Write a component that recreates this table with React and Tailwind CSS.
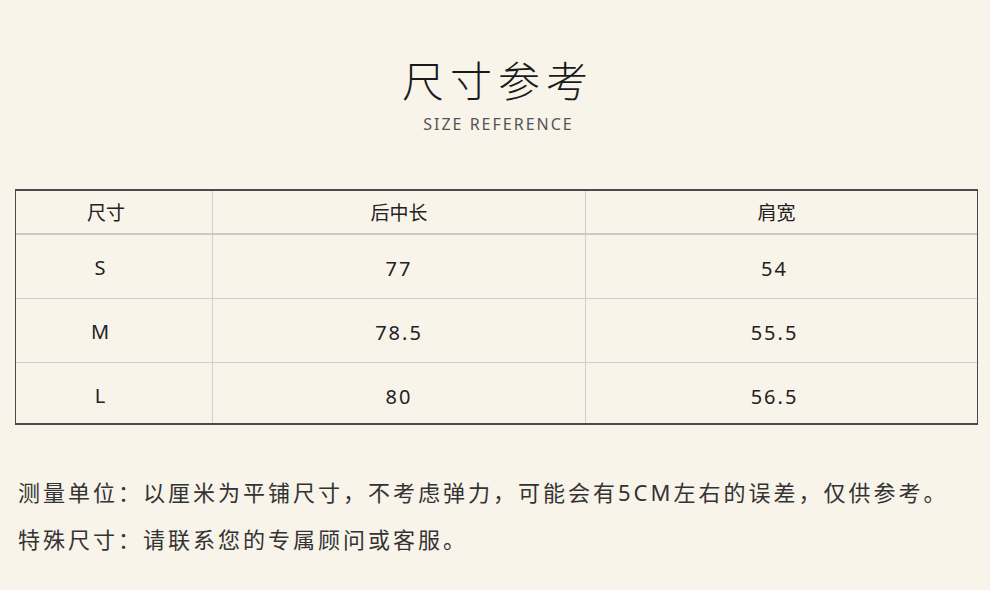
const rows = [
  ["S", "77", "54"],
  ["M", "78.5", "55.5"],
  ["L", "80", "56.5"],
];

const cjk = "font-['Noto_Sans','Noto_Sans_CJK_SC',sans-serif]";

export default function App() {
  return (
    <div className={`h-[590px] w-[990px] overflow-hidden bg-[#f8f4ea] text-[#222] ${cjk}`}>
      <div className="flex flex-col items-center pt-[55px]">
        <h1 className="text-[42px] font-light leading-[52px] tracking-[6px] pl-[6px] text-[#1a1a1a]">
          尺寸参考
        </h1>
        <p className="mt-[7px] text-[16px] leading-5 tracking-[2px] pl-[7px] text-[#555]">
          SIZE REFERENCE
        </p>
      </div>

      <div className="ml-[15px] mt-[55px] w-[963px] border border-t-2 border-b-2 border-[#4a4a4a]">
        <div className="grid h-[44px] grid-cols-[196px_373px_1fr] border-b-2 border-[#c9c9c9] text-[19px]">
          <div className="flex items-center justify-center pr-[16px] pt-[3px]">尺寸</div>
          <div className="flex items-center justify-center border-l border-[#cfcfcf] pt-[3px]">后中长</div>
          <div className="flex items-center justify-center border-l border-[#cfcfcf] pr-[10px] pt-[3px]">肩宽</div>
        </div>
        {rows.map((r, i) => {
          const last = i === rows.length - 1;
          return (
            <div
              key={r[0]}
              className={`grid grid-cols-[196px_373px_1fr] text-[20px] tracking-[2px] ${
                last ? "h-[60px]" : "h-[64px] border-b border-[#cfcfcf]"
              }`}
            >
              <div className={`flex items-center justify-center pr-[26px] ${last ? "pt-[6px]" : "pt-[2px]"}`}>{r[0]}</div>
              <div className={`flex items-center justify-center border-l border-[#cfcfcf] ${last ? "pt-[8px]" : "pt-[4px]"}`}>{r[1]}</div>
              <div className={`flex items-center justify-center border-l border-[#cfcfcf] pr-[14px] ${last ? "pt-[8px]" : "pt-[4px]"}`}>{r[2]}</div>
            </div>
          );
        })}
      </div>

      <div className="ml-[18px] mt-[44px] text-[22px] leading-[47px] tracking-[3px] text-[#333]">
        <p>测量单位：以厘米为平铺尺寸，不考虑弹力，可能会有5CM左右的误差，仅供参考。</p>
        <p>特殊尺寸：请联系您的专属顾问或客服。</p>
      </div>
    </div>
  );
}
